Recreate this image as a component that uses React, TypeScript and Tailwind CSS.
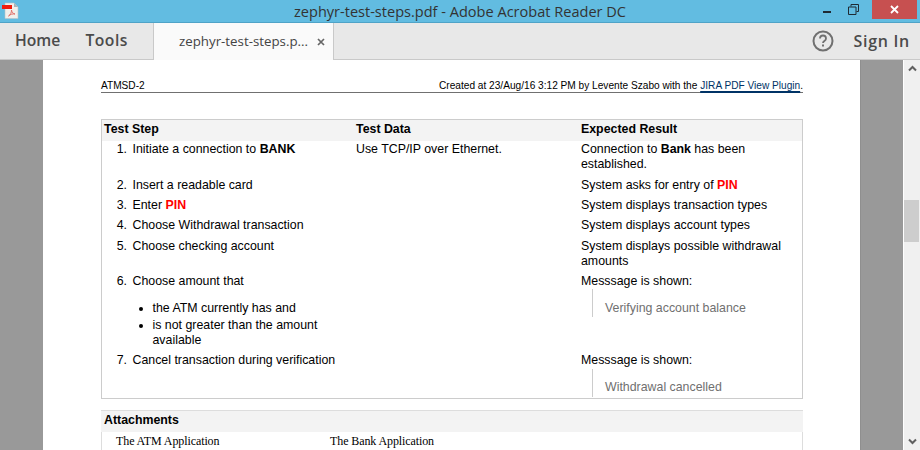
import React from "react";

const sans = "font-['Liberation_Sans',Arial,sans-serif]";

function Row({ n, step, data, result, h }: { n?: string; step?: React.ReactNode; data?: string; result?: React.ReactNode; h: string }) {
  return (
    <div className={`flex ${h}`}>
      <div className="w-[254px] flex shrink-0">
        <div className="w-[25px] text-right shrink-0">{n}</div>
        <div className="pl-[5.500px] w-[220px]">{step}</div>
      </div>
      <div className="w-[225px] shrink-0">{data}</div>
      <div className="flex-1 pr-2">{result}</div>
    </div>
  );
}

function Quote({ children, m }: { children: string; m: string }) {
  return (
    <div className={`ml-[11px] border-l border-[#cccccc] pl-[12px] text-[#707070] flex items-end h-[28px] ${m}`}>
      <span>{children}</span>
    </div>
  );
}

export default function App() {
  return (
    <div className={`w-[920px] h-[450px] overflow-hidden flex flex-col ${sans}`}>
      <div className="h-[23px] bg-[#62bce1] border-b border-[#4fa3c7] flex items-center shrink-0">
        <svg className="shrink-0" width="19" height="22" viewBox="0 0 19 22">
          <path d="M5 3h9l4 4v11.500H5z" fill="#f2f0ec" stroke="#b9c4c8" strokeWidth="0.6" />
          <path d="M14 3v4h4z" fill="#a8b4b8" />
          <rect x="2" y="5" width="10" height="4" fill="#ee1c0c" />
          <path d="M8.500 16c2-1 3-3.500 3-6 .5 2.500 1.500 3.500 3.500 4-2.500-.3-4.500.2-6.500 2z" fill="none" stroke="#e2706a" strokeWidth="1" />
        </svg>
        <div className="flex-1 text-center text-[14.550px] text-[#333333] font-['Open_Sans','Noto_Sans',sans-serif] leading-[22px] pl-[78px]">
          zephyr-test-steps.pdf - Adobe Acrobat Reader DC
        </div>
        <div className="flex items-center h-full">
          <div className="w-[8px] h-[2px] bg-[#1f2a33] mt-[2px] mr-[17px]" />
          <svg width="11" height="11" viewBox="0 0 11 11" className="mr-[13px] mb-[4px]">
            <path d="M3 2.500V.5h7.500v7H8.500M.5 3h7.500v7.500H.5z" fill="none" stroke="#1f2a33" strokeWidth="1" />
          </svg>
          <div className="w-[45px] h-[19px] bg-[#c75050] flex items-center justify-center mb-[4px]">
            <svg width="9" height="9" viewBox="0 0 9 9"><path d="M1 1l7 7M8 1l-7 7" stroke="#fff" strokeWidth="1.800" /></svg>
          </div>
          <div className="w-[3px]" />
        </div>
      </div>

      <div className="h-[37px] bg-[#e8e8e8] border-b border-[#c9c9c9] flex items-stretch shrink-0 font-['Open_Sans','Noto_Sans',sans-serif] text-[#4b4b4b]">
        <div className="w-[153px] flex items-center gap-[25px] pl-[15px] font-semibold text-[15.700px]">
          <span>Home</span>
          <span className="tracking-[0.5px]">Tools</span>
        </div>
        <div className="w-[181px] bg-[#fafafa] border-x border-[#c9c9c9] -mb-[1px] flex items-center pl-[25px] text-[13.300px] text-[#444444]">
          <span>zephyr-test-steps.p...</span>
          <svg className="ml-[9px]" width="8" height="8" viewBox="0 0 8 8"><path d="M1 1l6 6M7 1L1 7" stroke="#666" strokeWidth="1.700" /></svg>
        </div>
        <div className="flex-1 flex items-center justify-end pr-[10px]">
          <svg width="22" height="22" viewBox="0 0 22 22" className="mr-[20px]">
            <circle cx="11" cy="11" r="9.500" fill="none" stroke="#707070" strokeWidth="2" />
            <path d="M8 8.500c0-4 6-4 6 0 0 2.500-3 2.500-3 4.500" fill="none" stroke="#707070" strokeWidth="1.800" />
            <rect x="10" y="14.500" width="2" height="2" fill="#707070" />
          </svg>
          <span className="font-semibold text-[16px] tracking-[0.7px]">Sign In</span>
        </div>
      </div>

      <div className="flex-1 flex min-h-0">
        <div className="w-[43px] bg-[#999999] shrink-0" />
        <div className="w-[817px] bg-white shrink-0 overflow-hidden text-[12.370px] leading-[15px] text-black pl-[58px] pr-[57px]">
          <div className="h-[33px] pt-[19px] border-b border-[#707070] flex justify-between text-[10.140px] leading-[14px]">
            <span>ATMSD-2</span>
            <span>
              Created at 23/Aug/16 3:12 PM by Levente Szabo with the{" "}
              <span className="underline decoration-[#003366] decoration-[1.500px] underline-offset-[2px] text-[#003366]">JIRA PDF View Plugin</span>.
            </span>
          </div>

          <div className="mt-[26px] h-[280px] border border-[#cccccc] overflow-hidden">
            <div className="flex h-[21px] bg-[#f3f3f3] items-start font-bold pt-[2px]">
              <div className="w-[254px] pl-[2px] shrink-0">Test Step</div>
              <div className="w-[225px] shrink-0">Test Data</div>
              <div>Expected Result</div>
            </div>
            <div className="pt-[1px]">
              <Row h="h-[36px]" n="1." step={<>Initiate a connection to <b>BANK</b></>} data="Use TCP/IP over Ethernet." result={<>Connection to <b>Bank</b> has been established.</>} />
              <Row h="h-[20px]" n="2." step="Insert a readable card" result={<>System asks for entry of <b className="text-[#ff0000]">PIN</b></>} />
              <Row h="h-[20px]" n="3." step={<>Enter <b className="text-[#ff0000]">PIN</b></>} result="System displays transaction types" />
              <Row h="h-[21px]" n="4." step="Choose Withdrawal transaction" result="System displays account types" />
              <Row h="h-[35px]" n="5." step="Choose checking account" result="System displays possible withdrawal amounts" />
              <Row
                h="h-[79px]"
                n="6."
                step={
                  <>
                    <div>Choose amount that</div>
                    <ul className="list-disc pl-[20px] mt-[12px] w-[205px]">
                      <li>the ATM currently has and</li>
                      <li className="mt-[2px]">is not greater than the amount available</li>
                    </ul>
                  </>
                }
                result={
                  <>
                    <div>Messsage is shown:</div>
                    <Quote m="pb-[1px]">Verifying account balance</Quote>
                  </>
                }
              />
              <Row
                h="h-[46px]"
                n="7."
                step="Cancel transaction during verification"
                result={
                  <>
                    <div>Messsage is shown:</div>
                    <Quote m="mt-[1px] pb-[2px]">Withdrawal cancelled</Quote>
                  </>
                }
              />
            </div>
          </div>

          <div className="mt-[11px] border-t border-[#dddddd]">
            <div className="h-[21px] bg-[#f3f3f3] flex items-start pt-[2px] pl-[3px] font-bold">Attachments</div>
            <div className="border-x border-[#dddddd] h-[30px] flex font-['Liberation_Serif',serif] text-[12px] pl-[14px] pt-[2px] leading-[15px] tracking-[-0.1px]">
              <span className="w-[214px]">The ATM Application</span>
              <span>The Bank Application</span>
            </div>
          </div>
        </div>
        <div className="w-[43px] bg-[#999999] border-l border-[#8f8f8f] shrink-0" />
        <div className="w-[17px] bg-[#f0f0f0] shrink-0 flex flex-col items-center border-l border-white">
          <svg className="mt-[5px] shrink-0" width="9" height="7" viewBox="0 0 9 7"><path d="M1 5.500l3.500-3.500 3.500 3.500" fill="none" stroke="#606060" strokeWidth="2" /></svg>
          <div className="w-[15px] h-[42px] bg-[#cdcdcd] mt-[128px] self-start shrink-0" />
          <svg className="mt-auto mb-[5px] shrink-0" width="9" height="7" viewBox="0 0 9 7"><path d="M1 1.500l3.500 3.500 3.500-3.500" fill="none" stroke="#606060" strokeWidth="2" /></svg>
        </div>
      </div>
    </div>
  );
}
